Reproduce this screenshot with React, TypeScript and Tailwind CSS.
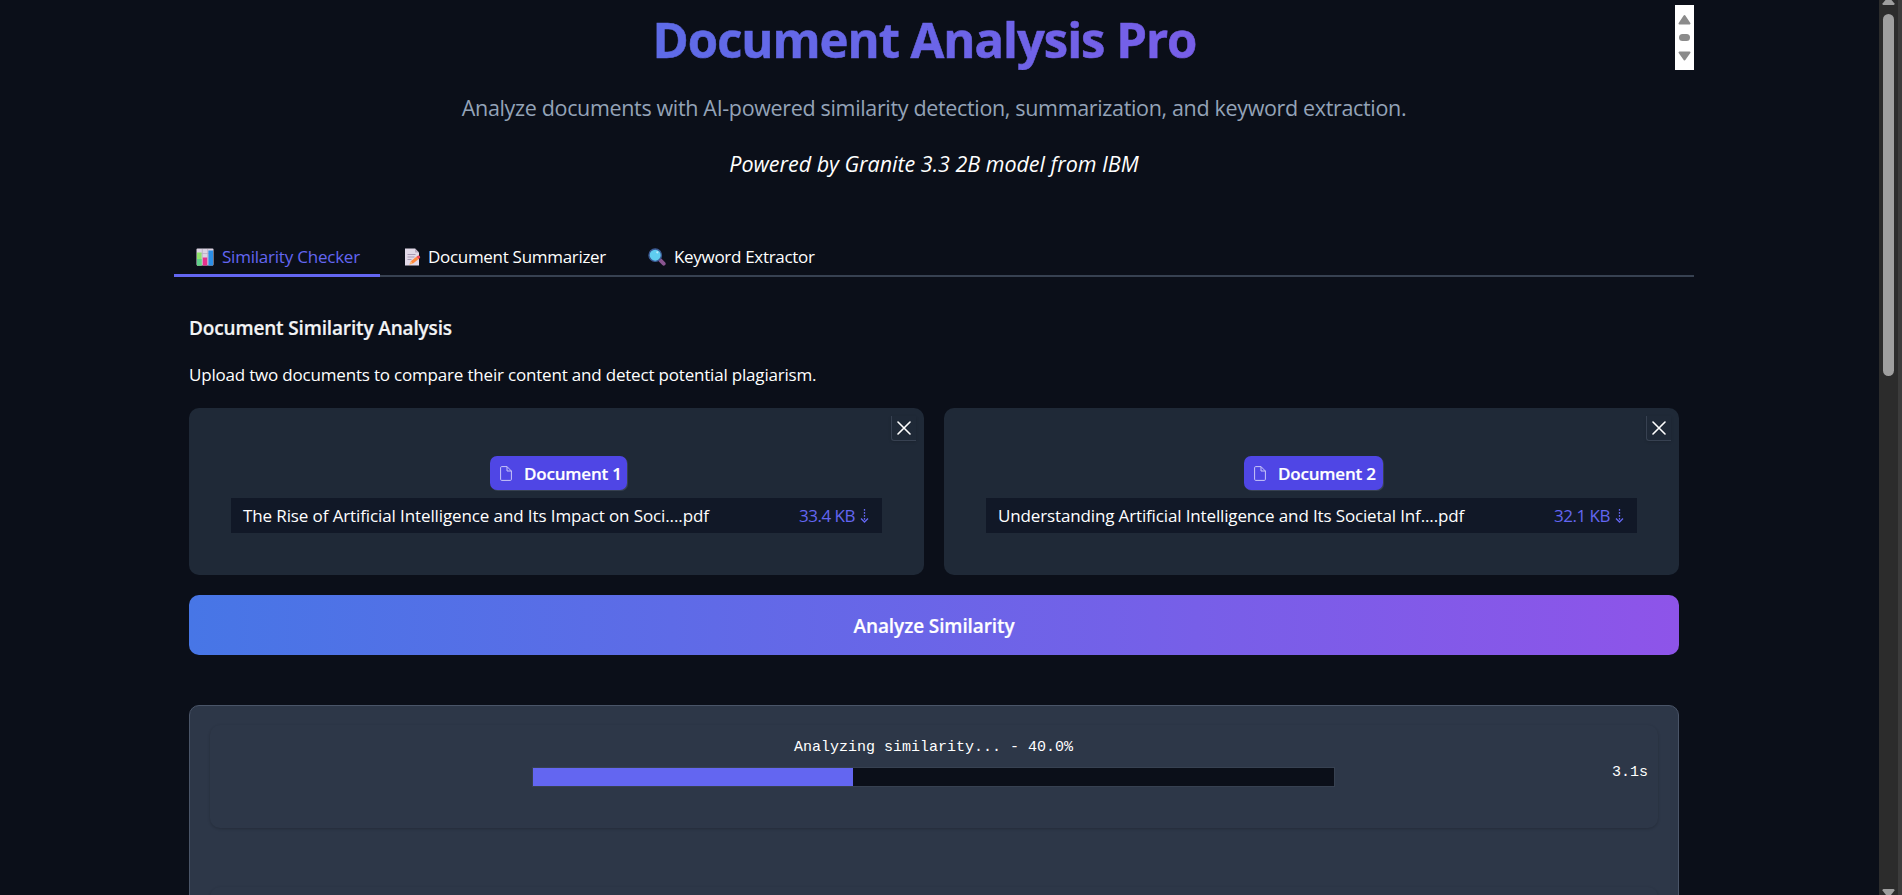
import { useState } from 'react';

type Doc = { label: string; name: string; size: string; nameClass: string; badgeClass: string };

const docs: Doc[] = [
  {
    label: 'Document 1',
    name: 'The Rise of Artificial Intelligence and Its Impact on Soci....pdf',
    size: '33.4 KB',
    nameClass: 'tracking-[-0.11px]',
    badgeClass: 'w-[137px]',
  },
  {
    label: 'Document 2',
    name: 'Understanding Artificial Intelligence and Its Societal Inf....pdf',
    size: '32.1 KB',
    nameClass: 'tracking-[-0.14px]',
    badgeClass: 'w-[139px]',
  },
];

function ChartIcon() {
  return (
    <svg width="18" height="18" viewBox="0 0 18 18" className="block">
      <rect x="0.5" y="0.5" width="17" height="17" rx="1" fill="#dcd3e2" />
      <path d="M6.3 1v16M11.7 1v16M1 5.5h16" stroke="#b9aec4" strokeWidth="0.8" />
      <rect x="1" y="4.5" width="4.6" height="13" fill="#8fe36a" />
      <rect x="1" y="11" width="4.6" height="6.5" fill="#5fd08a" />
      <rect x="6.8" y="9.5" width="4.4" height="8" fill="#e8308c" />
      <rect x="12.4" y="2.5" width="4.6" height="15" fill="#2b8fe8" />
    </svg>
  );
}

function MemoIcon() {
  return (
    <svg width="18" height="18" viewBox="0 0 18 18" className="block">
      <path d="M1 0.5h10l4 4v13H1z" fill="#e2d9e8" />
      <path d="M11 0.5v4h4z" fill="#b8acc2" />
      <path d="M3.5 6.5h8M3.5 9h7M3.5 11.5h4" stroke="#a99bb5" strokeWidth="1" />
      <path d="M6.8 13.2l5.600-4.400 2 2.500-5.700 4.500z" fill="#ff8a3d" />
      <path d="M12.4 8.800l1.700-1.300q1.400-.4 1.900 1t-.3 1.800l-1.300 1z" fill="#ee4b5c" />
      <path d="M6.8 13.2l1.900 2.600-3.500.9z" fill="#ffb36b" />
    </svg>
  );
}

function SearchIcon() {
  return (
    <svg width="18" height="18" viewBox="0 0 18 18" className="block">
      <path d="M11.2 11.2l4.500 4.500" stroke="#8a5590" strokeWidth="3.8" strokeLinecap="round" />
      <circle cx="7.2" cy="7.2" r="6.2" fill="#5fcdf0" stroke="#3c5a94" strokeWidth="1.4" />
      <circle cx="9.3" cy="4.3" r="1.1" fill="#b9ecfb" />
    </svg>
  );
}

const tabs = [
  { label: 'Similarity Checker', Icon: ChartIcon, box: 'w-[206px] pl-[22px]', text: 'tracking-[-0.22px] ml-2' },
  { label: 'Document Summarizer', Icon: MemoIcon, box: 'w-[246px] pl-6', text: 'tracking-[-0.3px] ml-[6px]' },
  { label: 'Keyword Extractor', Icon: SearchIcon, box: 'w-[210px] pl-[22px]', text: 'tracking-[-0.31px] ml-2' },
];

function MiniScrollbar() {
  return (
    <div className="h-[65px] w-[19px] shrink-0 bg-white">
      <svg width="19" height="65" viewBox="0 0 19 65" fill="#8b8b8b" stroke="#8b8b8b" strokeLinejoin="round">
        <path d="M9.5 11l5 7.500h-10z" strokeWidth="2" />
        <rect x="4" y="29" width="11" height="7" rx="3.5" stroke="none" />
        <path d="M4.5 47.500h10l-5 7z" strokeWidth="2" />
      </svg>
    </div>
  );
}

function PageScrollbar() {
  return (
    <div className="flex h-full w-[23px] shrink-0 border-r-4 border-[#3c3c3c] bg-[#2c2c2c]">
      <div className="flex w-full flex-col items-center pr-px">
        <svg width="13" height="5" viewBox="0 0 13 5" className="block">
          <path d="M3.5 0h6l3 3.500q.3 1.500-1 1.500h-10q-1.300 0-1-1.500z" fill="#9f9f9f" />
        </svg>
        <div className="mt-[9px] h-[362px] w-[11px] rounded-full bg-[#9f9f9f]" />
        <svg width="13" height="6" viewBox="0 0 13 6" className="mt-auto block">
          <path d="M1.5 0h10q1.300 0 1 1.500L9 6H4L.5 1.500Q.2 0 1.500 0z" fill="#9f9f9f" />
        </svg>
      </div>
    </div>
  );
}

function DocumentCard({ doc }: { doc: Doc }) {
  return (
    <div className="relative h-[167px] w-[735px] rounded-[10px] bg-[#1f2937] px-[42px] pt-12">
      <button
        aria-label={`Remove ${doc.label}`}
        className="absolute top-2 right-2 flex h-[25px] w-[25px] items-center justify-center rounded-bl-[3px] border-b border-l border-[#374151] bg-[#1f2937] shadow-[0_1px_3px_rgba(0,0,0,0.15)]"
      >
        <svg width="14" height="14" viewBox="0 0 14 14" stroke="#fff" strokeWidth="1.6" strokeLinecap="round">
          <path d="M1 1l12 12M13 1L1 13" />
        </svg>
      </button>
      <div className="flex justify-center pl-1">
        <div
          className={`flex h-[34px] items-center rounded-[7px] bg-[#4f46e5] pl-[10px] shadow-[1px_1px_0_#374151] ${doc.badgeClass}`}
        >
          <svg width="12" height="15" viewBox="0 0 12 15" fill="none" stroke="#c9c6f8" strokeWidth="1" strokeLinejoin="round">
            <path d="M7 .6H1.700Q.6.600.6 1.700v11.600q0 1.100 1.100 1.100h8.600q1.100 0 1.100-1.100V5z" />
            <path d="M7 .6V5h4.400" />
          </svg>
          <span className="ml-3 pt-0.5 text-[17px] leading-6 font-semibold tracking-[-0.2px] whitespace-nowrap text-white [-webkit-text-stroke:0.2px_#fff]">
            {doc.label}
          </span>
        </div>
      </div>
      <div className="mt-2 flex h-[35px] items-center justify-between bg-[#111827] pr-[13px] pl-3 text-[17px] leading-6 whitespace-nowrap">
        <span className={doc.nameClass}>{doc.name}</span>
        <span className="flex items-center text-[#6366f1]">
          <span className="tracking-[-0.5px]">{doc.size}</span>
          <svg width="9" height="14" viewBox="0 0 9 14" className="ml-[5px]" fill="none" stroke="#6366f1" strokeWidth="1.3">
            <path d="M4.5 0v11" strokeDasharray="1.7 1.3" />
            <path d="M1 9.500l3.500 3.500L8 9.500" />
          </svg>
        </span>
      </div>
    </div>
  );
}

export default function App() {
  const [active, setActive] = useState(0);
  const progress = 40;
  return (
    <div className="flex h-[895px] w-[1902px] overflow-hidden bg-[#0b0f19] font-['Open_Sans','Noto_Sans',sans-serif] text-white">
      <main className="flex-1 pt-[5px] pl-[174px]">
        <div className="w-[1520px]">
          <header>
            <div className="flex h-[65px]">
              <h1 className="flex-1 text-center text-[49px] leading-[68px] font-bold tracking-[-1.03px] text-transparent bg-clip-text bg-linear-to-r/srgb from-[#4776e6] to-[#8e54e9] [-webkit-text-stroke:0.6px_transparent]">
                Document Analysis Pro
              </h1>
              <MiniScrollbar />
            </div>
            <p className="mt-[22px] text-center text-[21.5px] leading-8 tracking-[-0.34px] text-[#94a3b8]">
              Analyze documents with AI-powered similarity detection, summarization, and keyword extraction.
            </p>
            <p className="mt-6 text-center text-[21.5px] leading-8 tracking-[-0.02px] italic">
              Powered by Granite 3.3 2B model from IBM
            </p>
          </header>

          <nav className="mt-[55px] flex h-[42px] shadow-[inset_0_-2px_0_#374151]">
            {tabs.map(({ label, Icon, box, text }, i) => (
              <button
                key={label}
                onClick={() => setActive(i)}
                className={`flex items-start border-b-[3px] pt-[9px] text-[17px] leading-6 whitespace-nowrap ${box} ${
                  i === active ? 'border-[#6366f1] text-[#6366f1]' : 'border-transparent'
                }`}
              >
                <span className="mt-1">
                  <Icon />
                </span>
                <span className={`pt-px ${text}`}>{label}</span>
              </button>
            ))}
          </nav>

          <section className="px-[15px] pt-[39px]">
            <h3 className="text-[19px] leading-6 font-semibold tracking-[-0.15px] text-[#f3f4f6] [-webkit-text-stroke:0.2px_#f3f4f6]">
              Document Similarity Analysis
            </h3>
            <p className="mt-[23px] text-[17px] leading-6 tracking-[-0.19px]">
              Upload two documents to compare their content and detect potential plagiarism.
            </p>
            <div className="mt-[21px] flex gap-5">
              {docs.map((doc) => (
                <DocumentCard key={doc.label} doc={doc} />
              ))}
            </div>
            <button className="mt-5 block h-[60px] w-full rounded-[10px] bg-linear-to-r/srgb from-[#4776e6] to-[#8e54e9] pt-[3px] text-[19px] font-semibold tracking-[-0.1px] [-webkit-text-stroke:0.2px_#fff]">
              Analyze Similarity
            </button>

            <div className="mt-[50px] h-[240px] rounded-[10px] border border-[#4a5568] bg-[#2d3748] px-5 pt-[19px] font-['Liberation_Mono',monospace] text-[15px]">
              <div className="flex h-[103px] justify-between rounded-[10px] pl-[322px] shadow-[0_1px_3px_rgba(0,0,0,0.2)]">
                <div className="w-[803px] pt-[13px]">
                  <div className="text-center leading-5">Analyzing similarity... - {progress.toFixed(1)}%</div>
                  <div className="mt-[9px] h-5 border border-[#374151] bg-[#0b0f19]">
                    <div className="h-full bg-[#6366f1]" style={{ width: `${progress}%` }} />
                  </div>
                </div>
                <div className="pt-[38px] pr-[10px] leading-5">3.1s</div>
              </div>
              <div className="mt-[59px] h-[103px] rounded-[10px] shadow-[0_1px_3px_rgba(0,0,0,0.2)]" />
            </div>
          </section>
        </div>
      </main>
      <PageScrollbar />
    </div>
  );
}
